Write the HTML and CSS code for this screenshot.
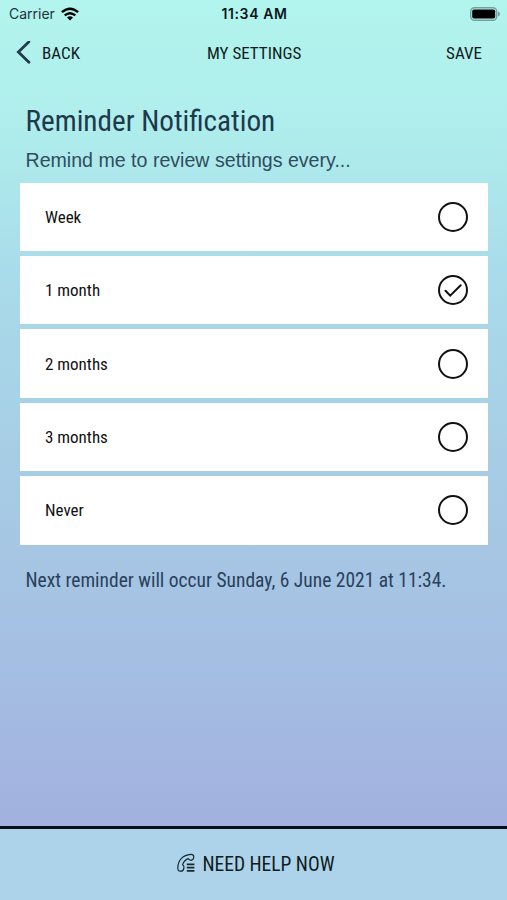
FILE: index.html
```
<!DOCTYPE html>
<html lang="en">
<head>
<meta charset="utf-8">
<title>My Settings</title>
<link rel="stylesheet" href="styles.css">
</head>
<body>
<div class="screen">
  <div class="status">
    <div class="carrier"><span>Carrier</span>
      <svg viewBox="0 0 18 14" width="18" height="14"><g fill="none" stroke="#000" stroke-width="2.4"><path d="M.9 5.2Q9-1.9 17.1 5.2"/><path d="M3.7 8.4Q9 3.9 14.3 8.4"/></g><path d="M6 10.5Q9 8.1 12 10.5L9 13.6Z"/></svg>
    </div>
    <span class="time">11:34 AM</span>
    <svg class="battery" viewBox="0 0 30 14" width="30" height="14"><rect x=".7" y=".7" width="26" height="12.6" rx="3.8" fill="none" stroke="#76a09e" stroke-width="1.4"/><rect x="2.2" y="2.4" width="23" height="9.2" rx="1.8"/><path d="M28 4.6Q30 5.4 30 7T28 9.4Z" fill="#76a09e"/></svg>
  </div>
  <header class="nav">
    <div class="back"><svg viewBox="0 0 15 24" width="15" height="24"><path d="M12.9 .8L2.4 11L12.9 21.2" fill="none" stroke="#24394b" stroke-width="2.8" stroke-linecap="round"/></svg><span>BACK</span></div>
    <span>MY SETTINGS</span>
    <span class="save">SAVE</span>
  </header>
  <main>
    <h1>Reminder Notification</h1>
    <p class="hint">Remind me to review settings every...</p>
    <div class="options">
      <div class="option"><span>Week</span><i class="radio"></i></div>
      <div class="option"><span>1 month</span><i class="radio"><svg viewBox="0 0 26 26" width="26" height="26"><path d="M5.5 13.7L10.2 18.6L20.7 8.2" fill="none" stroke="#111" stroke-width="2" stroke-linecap="round"/></svg></i></div>
      <div class="option"><span>2 months</span><i class="radio"></i></div>
      <div class="option"><span>3 months</span><i class="radio"></i></div>
      <div class="option"><span>Never</span><i class="radio"></i></div>
    </div>
    <p class="next">Next reminder will occur Sunday, 6 June 2021 at 11:34.</p>
  </main>
  <footer>
    <svg viewBox="0 0 20 20" width="20" height="20"><g fill="none" stroke="#17282f" stroke-width="1.2" stroke-linejoin="round"><path d="M7.8 15.4Q7.4 18.4 4.5 18.2Q1.6 18.4 1.8 14.6Q2 9 5.4 5.4Q9 1.8 14.8 1.4Q17.6 1.2 17.8 3.6Q18 5.6 16.4 6.8Q15 7.9 13.6 6.8L12.2 5.6Q8 7.2 6.6 11.6L7.6 12.8Q8.2 13.8 7.8 15.4Z"/><path d="M10.8 11.4H18.4M10.8 14.6H18.4M10.8 17.8H18.4" stroke-width="1.7"/></g></svg>
    <span>NEED HELP NOW</span>
  </footer>
</div>
</body>
</html>
```
FILE: styles.css
```
* { box-sizing: border-box; }
body { margin: 0; }
.screen {
  width: 507px;
  height: 900px;
  display: flex;
  flex-direction: column;
  background: linear-gradient(#b2f4ee 0, #afeeec 120px, #a9dcea 270px, #a7cce5 470px, #a5c0e3 640px, #a2b1df 827px);
  font-family: "Roboto Condensed", Roboto, sans-serif;
  font-stretch: condensed;
  color: #101b20;
}
.status {
  height: 27px;
  padding: 0 7px 0 9px;
  display: grid;
  grid-template-columns: 1fr auto 1fr;
  align-items: center;
  font-family: Inter, sans-serif;
  font-stretch: normal;
  font-size: 14px;
}
.carrier { display: flex; align-items: center; gap: 6px; color: #1d3437; }
.time { font-weight: 600; letter-spacing: .6px; color: #0c1717; }
.battery { justify-self: end; }
.nav {
  height: 52px;
  padding: 0 25px 0 16px;
  display: grid;
  grid-template-columns: 191px 1fr auto;
  align-items: center;
  font-size: 17px;
}
.back { display: flex; align-items: center; gap: 11px; }
.save { justify-self: end; }
main { flex: 1; padding: 23px 19.5px 0 20.4px; }
h1 { margin: 0 0 0 5.1px; font-size: 29.2px; line-height: 38px; font-weight: 400; color: #20384b; }
.hint {
  margin: 7px 0 0 5.1px;
  font-family: "Liberation Sans", sans-serif;
  font-stretch: normal;
  font-size: 19.6px;
  line-height: 26px;
  color: #304d5e;
}
.options { margin-top: 9.6px; display: grid; gap: 5px; }
.option {
  height: 68.4px;
  padding: 0 20px 0 24.6px;
  display: flex;
  align-items: center;
  justify-content: space-between;
  background: #fff;
  font-size: 17px;
  color: #111;
}
.radio { width: 30px; height: 30px; border: 2px solid #111; border-radius: 50%; }
.radio svg { display: block; }
.next { margin: 23px 0 0 5.1px; font-size: 19.5px; line-height: 26px; color: #29415b; }
footer {
  height: 74px;
  padding-left: 4px;
  border-top: 3px solid #080b18;
  background: #acd3ea;
  display: flex;
  align-items: center;
  justify-content: center;
  gap: 6px;
  font-size: 19.5px;
}
footer svg { margin-bottom: 3px; }
```
